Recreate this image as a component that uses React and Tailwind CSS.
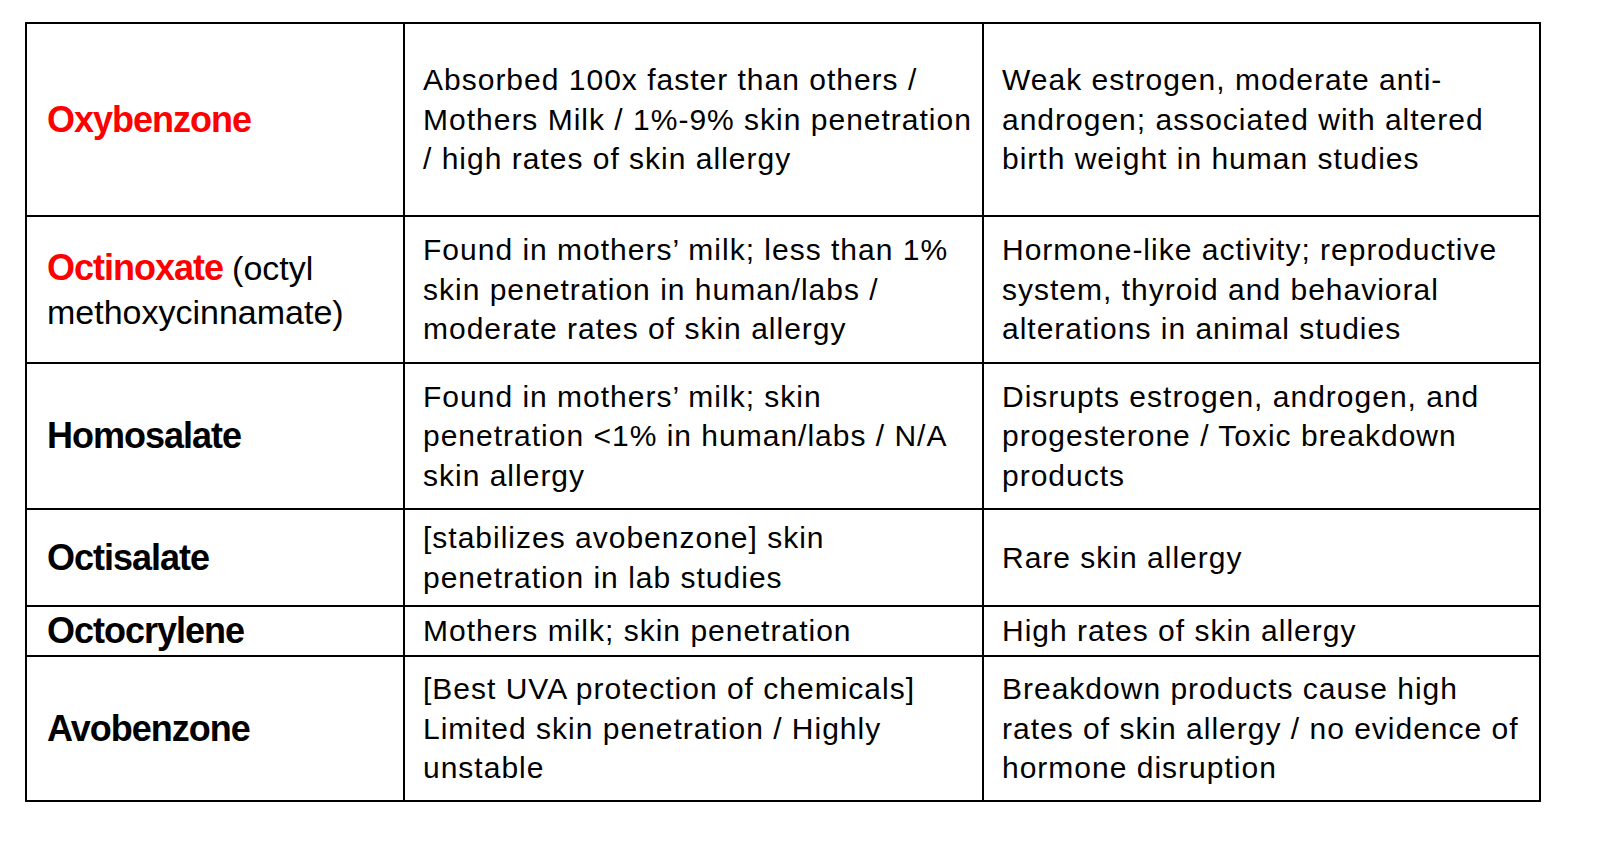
const rows = [
  {
    h: "h-[193px]",
    name: <span className="text-[#ff0000]">Oxybenzone</span>,
    b: "Absorbed 100x faster than others / Mothers Milk / 1%-9% skin penetration / high rates of skin allergy",
    c: "Weak estrogen, moderate anti-androgen; associated with altered birth weight in human studies",
  },
  {
    h: "h-[147px]",
    name: (
      <>
        <span className="text-[#ff0000]">Octinoxate</span>{" "}
        <span className="font-normal tracking-normal text-[34px]">(octyl methoxycinnamate)</span>
      </>
    ),
    b: "Found in mothers’ milk; less than 1% skin penetration in human/labs / moderate rates of skin allergy",
    c: "Hormone-like activity; reproductive system, thyroid and behavioral alterations in animal studies",
  },
  {
    h: "h-[146px]",
    name: "Homosalate",
    b: "Found in mothers’ milk; skin penetration <1% in human/labs / N/A skin allergy",
    c: "Disrupts estrogen, androgen, and progesterone / Toxic breakdown products",
  },
  {
    h: "h-[97px]",
    name: "Octisalate",
    b: "[stabilizes avobenzone] skin penetration in lab studies",
    c: "Rare skin allergy",
  },
  {
    h: "h-[50px]",
    name: "Octocrylene",
    b: "Mothers milk; skin penetration",
    c: "High rates of skin allergy",
  },
  {
    h: "h-[145px]",
    name: "Avobenzone",
    b: "[Best UVA protection of chemicals] Limited skin penetration / Highly unstable",
    c: "Breakdown products cause high rates of skin allergy / no evidence of hormone disruption",
  },
];

export default function App() {
  return (
    <div className="w-[1620px] h-[854px] bg-white pt-[22px] pl-[25px] font-['Liberation_Sans',Arial,sans-serif] text-black">
      <table className="table-fixed border-collapse w-[1514px]">
        <colgroup>
          <col className="w-[378px]" />
          <col className="w-[579px]" />
          <col className="w-[557px]" />
        </colgroup>
        <tbody>
          {rows.map((r, i) => (
            <tr key={i} className={r.h}>
              <td className="border-2 border-black pl-[20px] pr-3 align-middle text-[36px] leading-[44px] font-bold tracking-[-1px]">
                {r.name}
              </td>
              <td className="border-2 border-black pl-[18px] pr-2 align-middle text-[30px] leading-[39.5px] tracking-[1px]">
                {r.b}
              </td>
              <td className="border-2 border-black pl-[18px] pr-2 align-middle text-[30px] leading-[39.5px] tracking-[1px]">
                {r.c}
              </td>
            </tr>
          ))}
        </tbody>
      </table>
    </div>
  );
}
